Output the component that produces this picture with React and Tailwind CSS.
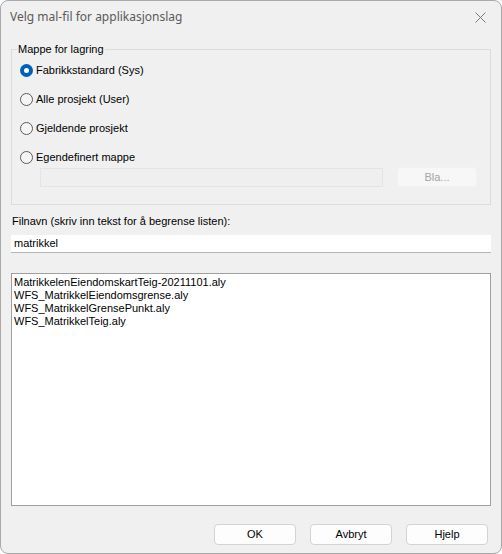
const options = [
  { id: "sys", label: "Fabrikkstandard (Sys)", checked: true },
  { id: "user", label: "Alle prosjekt (User)" },
  { id: "current", label: "Gjeldende prosjekt" },
  { id: "custom", label: "Egendefinert mappe" },
];

const files = [
  "MatrikkelenEiendomskartTeig-20211101.aly",
  "WFS_MatrikkelEiendomsgrense.aly",
  "WFS_MatrikkelGrensePunkt.aly",
  "WFS_MatrikkelTeig.aly",
];

const Radio = ({ checked }) =>
  checked ? (
    <span className="w-[13px] h-[13px] rounded-full bg-[#005fb8] flex items-center justify-center">
      <span className="w-[5px] h-[5px] rounded-full bg-white" />
    </span>
  ) : (
    <span className="w-[13px] h-[13px] rounded-full border border-[#5c5c5c] bg-[#f5f5f5]" />
  );

const Button = ({ children }) => (
  <button className="w-[82px] h-[21px] rounded-[4px] border border-[#d3d3d3] bg-[#fdfdfd] text-[11px] text-black">
    {children}
  </button>
);

export default function App() {
  return (
    <div
      className="w-[502px] h-[554px] flex flex-col bg-[#f0f0f0] border border-[#a9a9a9] rounded-t-[8px] rounded-b-[8px] text-[11px] text-black"
      style={{ fontFamily: '"Liberation Sans", Arial, sans-serif' }}
    >
      <div className="h-[31px] flex items-center justify-between pl-[9px] pr-[15px]">
        <span
          className="text-[12px] text-[#5a5a5a]"
          style={{ fontFamily: '"Segoe UI", "Noto Sans", sans-serif' }}
        >
          Velg mal-fil for applikasjonslag
        </span>
        <svg width="11" height="11" viewBox="0 0 11 11" className="mt-[1px]">
          <path d="M0.5 0.5 L10.5 10.5 M10.5 0.5 L0.5 10.5" stroke="#7a7a7a" strokeWidth="1" />
        </svg>
      </div>

      <fieldset className="mx-[10px] mt-[10px] border border-[#dcdcdc] pb-[17px]">
        <legend className="ml-[5px] px-px leading-[14px]">Mappe for lagring</legend>
        <div className="flex flex-col gap-[13px] pt-[6px] pl-[8px]">
          {options.map((o) => (
            <label key={o.id} className="h-[16px] flex items-center gap-[3px]">
              <Radio checked={o.checked} />
              <span>{o.label}</span>
            </label>
          ))}
        </div>
        <div className="flex items-center mt-[2px] pl-[28px] pr-[13px]">
          <div className="w-[343px] h-[19px] border border-[#e4e4e4] bg-[#efefef]" />
          <button className="ml-auto w-[80px] h-[20px] rounded-[4px] bg-[#f7f7f7] border border-[#f2f2f2] text-[#a3a3a3]">
            Bla...
          </button>
        </div>
      </fieldset>

      <div className="mx-[10px] mt-[9px] leading-[14px] pl-px">
        Filnavn (skriv inn tekst for å begrense listen):
      </div>
      <div className="mx-[10px] mt-[7px] h-[18px] bg-white border-b border-[#b5b5b5] flex items-center pl-[3px]">
        matrikkel
      </div>

      <div className="mx-[10px] mt-[20px] h-[233px] bg-white border border-[#9f9f9f] pt-[2px] pl-[2px]">
        {files.map((f) => (
          <div key={f} className="leading-[13px]">
            {f}
          </div>
        ))}
      </div>

      <div className="flex justify-end gap-[14px] mt-[18px] pr-[13px]">
        <Button>OK</Button>
        <Button>Avbryt</Button>
        <Button>Hjelp</Button>
      </div>
    </div>
  );
}
